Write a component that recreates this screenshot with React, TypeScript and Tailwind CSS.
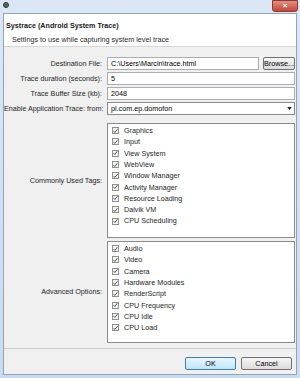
import React from 'react';

const tags = ['Graphics', 'Input', 'View System', 'WebView', 'Window Manager', 'Activity Manager', 'Resource Loading', 'Dalvik VM', 'CPU Scheduling'];
const advanced = ['Audio', 'Video', 'Camera', 'Hardware Modules', 'RenderScript', 'CPU Frequency', 'CPU Idle', 'CPU Load'];

function Check({ label }: { label: string }) {
  return (
    <div className="flex items-center h-[11.3px]">
      <span className="w-[7px] h-[7px] border border-[#8f8f8f] bg-[#f4f4f4] flex items-center justify-center">
        <svg viewBox="0 0 8 8" className="w-[6px] h-[6px]">
          <path d="M1 4.2 L3 6.3 L7 1.2" fill="none" stroke="#2b2b2b" strokeWidth="1.3" />
        </svg>
      </span>
      <span className="ml-[5px] text-[#1e1e1e]">{label}</span>
    </div>
  );
}

function Row({ label, children }: { label: string; children: React.ReactNode }) {
  return (
    <div className="flex items-center h-[13px]">
      <div className="w-[98px] text-right text-[#1e1e1e] whitespace-nowrap">{label}</div>
      <div className="ml-[5px] flex-1 flex h-full">{children}</div>
    </div>
  );
}

export default function App() {
  return (
    <div
      className="w-[300px] h-[378px] flex flex-col bg-gradient-to-b from-[#dbe7f4] to-[#c9dbee] text-[7.2px] leading-none"
      style={{ fontFamily: '"Liberation Sans", Arial, sans-serif' }}
    >
      {/* Title bar */}
      <div className="h-[13px] flex items-start justify-between">
        <div className="ml-[3px] mt-[2px] w-[6px] h-[6px] rounded-full bg-[#55685a] border border-[#2e3a33]" />
        <div className="mr-[2px] w-[26px] h-[12px] rounded-b-[3px] bg-gradient-to-b from-[#e0907f] to-[#c2443a] border border-[#8d3a32] flex items-center justify-center text-white font-bold text-[8px]">
          ×
        </div>
      </div>

      <div className="flex-1 mx-[3px] mb-[3px] border border-[#8fa4bc] bg-[#f0f0f0] flex flex-col">
        {/* Header */}
        <div className="h-[33px] bg-white border-b border-[#d6d6d6] flex flex-col px-[2px]">
          <div className="mt-[8px] font-bold text-[#1a1a1a]">Systrace (Android System Trace)</div>
          <div className="mt-[7px] ml-[6px] text-[#2a2a2a]">Settings to use while capturing system level trace</div>
        </div>

        {/* Form */}
        <div className="flex flex-col pt-[10px] pr-[1px] gap-[2px]">
          <Row label="Destination File:">
            <div className="flex-1 border border-[#abadb3] bg-white flex items-center pl-[3px]">C:\Users\Marcin\trace.html</div>
            <div className="ml-[4px] w-[32px] border border-[#707070] rounded-[2px] bg-gradient-to-b from-[#f6f6f6] to-[#dcdcdc] flex items-center justify-center">Browse...</div>
          </Row>
          <Row label="Trace duration (seconds):">
            <div className="flex-1 border border-[#abadb3] bg-white flex items-center pl-[3px]">5</div>
          </Row>
          <Row label="Trace Buffer Size (kb):">
            <div className="flex-1 border border-[#abadb3] bg-white flex items-center pl-[3px]">2048</div>
          </Row>
          <Row label="Enable Application Trace: from:">
            <div className="flex-1 border border-[#8a8a8a] bg-white flex items-center justify-between pl-[3px] pr-[2px]">
              <span>pl.com.ep.domofon</span>
              <svg viewBox="0 0 6 4" className="w-[5px] h-[3px]">
                <path d="M0 0 H6 L3 4 Z" fill="#1e1e1e" />
              </svg>
            </div>
          </Row>

          <div className="flex items-center mt-[6px]">
            <div className="w-[98px] text-right text-[#1e1e1e]">Commonly Used Tags:</div>
            <div className="ml-[5px] flex-1 h-[115px] border border-[#8c8c8c] bg-white pl-[4px] pt-[1px]">
              {tags.map((t) => (
                <Check key={t} label={t} />
              ))}
            </div>
          </div>

          <div className="flex items-center mt-[1px]">
            <div className="w-[98px] text-right text-[#1e1e1e]">Advanced Options:</div>
            <div className="ml-[5px] flex-1 h-[102px] border border-[#8c8c8c] bg-white pl-[4px] pt-[1px]">
              {advanced.map((t) => (
                <Check key={t} label={t} />
              ))}
            </div>
          </div>
        </div>

        {/* Separator */}
        <div className="mt-[5px] border-t border-[#c8c8c8]" />

        {/* Buttons */}
        <div className="flex justify-end gap-[5px] pr-[4px] mt-[8px]">
          <div className="w-[51px] h-[13px] border border-[#3c7fb1] rounded-[2px] bg-gradient-to-b from-[#eaf6fd] to-[#bee6fd] flex items-center justify-center">OK</div>
          <div className="w-[51px] h-[13px] border border-[#707070] rounded-[2px] bg-gradient-to-b from-[#f6f6f6] to-[#dcdcdc] flex items-center justify-center">Cancel</div>
        </div>
      </div>
    </div>
  );
}
